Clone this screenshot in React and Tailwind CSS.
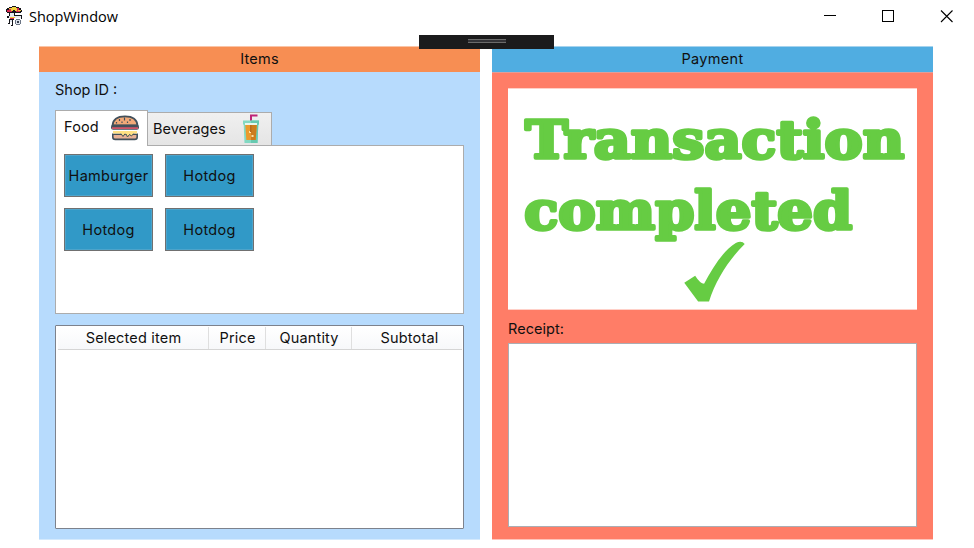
import React from 'react';

function CartIcon() {
  return (
    <svg width="20" height="22" viewBox="0 0 20 22" shapeRendering="crispEdges" className="shrink-0">
      <path d="M2 6V4h1V3h2V2h3V1h4v1h3v1h2v2h1v2h-1v1H3V7H2z" fill="#15151a" />
      <path d="M3 5h2V4h3v3H3zM12 3h3v2h1v2h-4z" fill="#d8284f" />
      <path d="M7 3h1V2h4v1h1v3h-2V5H9v1H7z" fill="#f2d13c" />
      <path d="M5 3h2v1H5zM14 5h3v1h-3z" fill="#f2c63c" />
      <path d="M5 8h1v3H5zM10 8h1v3h-1zM11 10h7v1h-7zM3 11h2v2H3z" fill="#15151a" />
      <path d="M6 8h4v3H6zM5 11h12v2H5z" fill="#e6eaf1" />
      <path d="M6 12h5v1H6z" fill="#f2c63c" />
      <path d="M6 13h4v1H6z" fill="#d8284f" />
      <path d="M5 14h5v1H5zM17 11h1v3h-1z" fill="#15151a" />
      <path d="M12 14h4v1h1v4h-1v1h-4v-1h-1v-4h1z" fill="#6b7484" />
      <path d="M12 15h4v4h-4z" fill="#dde3ec" />
      <path d="M13 16h2v2h-2z" fill="#39404e" />
      <path d="M5 15h1v3H5zM8 15h1v5H8zM4 18h2v1H4zM7 20h2v1H7z" fill="#15151a" />
      <path d="M6 15h2v2H6z" fill="#dde3ec" />
    </svg>
  );
}

function BurgerIcon() {
  return (
    <svg width="30" height="26" viewBox="0 0 30 26" className="shrink-0">
      <path d="M2.500 10.500C3 4.500 7 1.400 15 1.400s12 3.100 12.500 9.100z" fill="#f3aa78" stroke="#42505b" strokeWidth="1.800" />
      <path d="M9.500 4v2M14.500 2.500v3M20 4v2M12 6.500v1.500M17.500 6.500v1.500M6.500 7v1.500" stroke="#42505b" strokeWidth="1.200" />
      <rect x="1" y="9.800" width="28" height="5" rx="2.200" fill="#42505b" />
      <path d="M2 12.300h26v1.600H2z" fill="#e4566a" />
      <path d="M2.800 19.200h24.400v2.800c0 1.500-1 2.400-2.500 2.400H5.300c-1.500 0-2.500-.900-2.500-2.400z" fill="#e8b195" stroke="#42505b" strokeWidth="1.600" />
      <path d="M3 16h24v2.500h-3.500l-1.500 2.500-2.500-1.500-2 3-2-3.500h-1l-1.500 2.500-2-3H3z" fill="#ffe183" />
      <path d="M11 18.700l2 2.800 2-2.800M16 19l1.500 3 2-2.500 2 1.500 2-2.300" fill="none" stroke="#42505b" strokeWidth="1" />
    </svg>
  );
}

function JuiceIcon() {
  return (
    <svg width="18" height="30" viewBox="0 0 18 30" className="shrink-0">
      <path d="M9 7V1.500h6.500" fill="none" stroke="#bf2479" strokeWidth="2" />
      <path d="M1 6.500h16v4h-.700L15.500 29h-13L1.700 10.500H1z" fill="#83d9c3" />
      <path d="M9 6.500h8v4h-.700L15.500 29H9z" fill="#67c9b0" />
      <path d="M3 9h12v2H3z" fill="#e7f7ef" />
      <path d="M3.300 11h11.400l-1 15H4.300z" fill="#ea9a2d" />
      <path d="M9 11h5.700l-1 15H9z" fill="#cc7d1d" />
      <path d="M7 17h2v2H7zM9.500 21h2v2h-2z" fill="#fbe2a6" />
      <path d="M8 11h1.500v7H8z" fill="#b86b1c" />
    </svg>
  );
}

function TitleBar() {
  return (
    <header className="flex h-8 items-center pl-1">
      <CartIcon />
      <span className="ml-[5px] mt-[2px] whitespace-nowrap font-['Open_Sans',sans-serif] text-[14.500px] leading-5 tracking-[-0.030px] text-black">ShopWindow</span>
      <svg width="136" height="16" viewBox="0 0 136 16" className="ml-auto mr-[17px]" fill="none" stroke="#000">
        <path d="M3 7.500h12" />
        <rect x="61.500" y="2.500" width="11" height="11" />
        <path d="M120 2.500l11.500 11.500M131.500 2.500L120 14" strokeWidth="1.100" />
      </svg>
    </header>
  );
}

function FoodButton({ children }) {
  return (
    <button className="flex h-[43px] w-[89px] items-center justify-center whitespace-nowrap border border-[#707070] bg-[#3199c7] p-0 tracking-[0.300px] shadow-[inset_0_0_0_1px_#4da4cb]">
      {children}
    </button>
  );
}

function ItemsPanel() {
  return (
    <section className="flex h-[494px] w-[441px] flex-col border-b border-[#d5eafd] bg-[#b7dbfd]">
      <h2 className="flex h-[26px] shrink-0 items-center justify-center border-t border-[#fac4a6] bg-[#f78e53] pb-[2px] tracking-[0.200px]">Items</h2>
      <div className="flex flex-1 flex-col px-4 pb-[10px] pt-2">
        <p className="h-[30px] leading-5">Shop ID :</p>
        <div className="z-10 -mb-px flex items-end">
          <div className="flex h-9 w-[93px] items-center justify-between border border-b-0 border-[#acacac] bg-white pb-[2px] pl-[8px] pr-[7px]">
            <span className="pb-px tracking-[0.150px]">Food</span>
            <BurgerIcon />
          </div>
          <div className="flex h-[34px] w-[124px] items-center justify-between border border-l-0 border-[#acacac] bg-gradient-to-b from-[#f0f0f0] to-[#e5e5e5] pl-[5px] pr-[11px]">
            <span>Beverages</span>
            <JuiceIcon />
          </div>
        </div>
        <div className="grid h-[169px] shrink-0 grid-cols-[89px_89px] content-start gap-x-3 gap-y-[11px] border border-[#acacac] bg-white pl-2 pt-2">
          <FoodButton>Hamburger</FoodButton>
          <FoodButton>Hotdog</FoodButton>
          <FoodButton>Hotdog</FoodButton>
          <FoodButton>Hotdog</FoodButton>
        </div>
        <div className="mt-[11px] flex-1 rounded-[1px] border border-[#7d828c] bg-white px-px pt-px">
          <div className="ml-px grid h-[23px] grid-cols-[151px_57px_86px_1fr] border-b border-[#d5d5d5] bg-gradient-to-b from-white to-[#f7f8fa] text-center leading-[21px] tracking-[0.180px]">
            <span className="border-r border-[#dfdfdf] pl-px">Selected item</span>
            <span className="border-r border-[#dfdfdf] pl-px">Price</span>
            <span className="border-r border-[#dfdfdf] pl-px">Quantity</span>
            <span className="pl-[5px]">Subtotal</span>
          </div>
        </div>
      </div>
    </section>
  );
}

function PaymentPanel() {
  return (
    <section className="flex h-[494px] w-[441px] flex-col border-b border-[#ffc5bb] bg-[#ff7d67]">
      <h2 className="flex h-[26px] shrink-0 items-center justify-center border-t border-[#a5d3ee] bg-[#50ade1] pb-[2px] tracking-[0.300px]">Payment</h2>
      <div className="flex flex-1 flex-col border-t border-[#e29d98] px-4 pb-3 pt-[15px]">
        <svg width="409" height="222" viewBox="0 0 409 222" className="shrink-0 border-y border-[#ffd0c8] bg-white" fill="#66cc43" stroke="#66cc43">
          <g fontFamily="'DejaVu Serif', serif" fontWeight="700" fontSize="53" strokeWidth="3.600" strokeLinejoin="round">
            <text x="15.500" y="70" textLength="382.500" lengthAdjust="spacingAndGlyphs">Transaction</text>
            <text x="14.500" y="141.500" textLength="331" lengthAdjust="spacingAndGlyphs">completed</text>
          </g>
          <path stroke="none" d="M176 195.500L187 188.500Q192 196.500 196 196.500C205 179.500 216 162.500 228 155.500Q234 152.500 237 156.500C222 171 208 192 201 214.500H190Q183 205 176 195.500Z" />
        </svg>
        <p className="h-[33px] pt-[9px] leading-5 tracking-[0.050px]">Receipt:</p>
        <div className="flex-1 border border-[#abadb3] bg-white" />
      </div>
    </section>
  );
}

export default function App() {
  return (
    <main className="relative h-[548px] w-[974px] overflow-hidden bg-white font-['Inter',sans-serif] text-[14.500px] text-[#101010]">
      <TitleBar />
      <div className="mt-[14px] flex gap-3 pl-[39px]">
        <ItemsPanel />
        <PaymentPanel />
      </div>
      <div className="absolute left-[419px] top-[35px] z-20 flex h-[14px] w-[135px] justify-center bg-[#1b1b1c] pt-1">
        <div className="h-1 w-[38px] border-y border-[#6b6b6b] bg-[#333337]" />
      </div>
    </main>
  );
}
